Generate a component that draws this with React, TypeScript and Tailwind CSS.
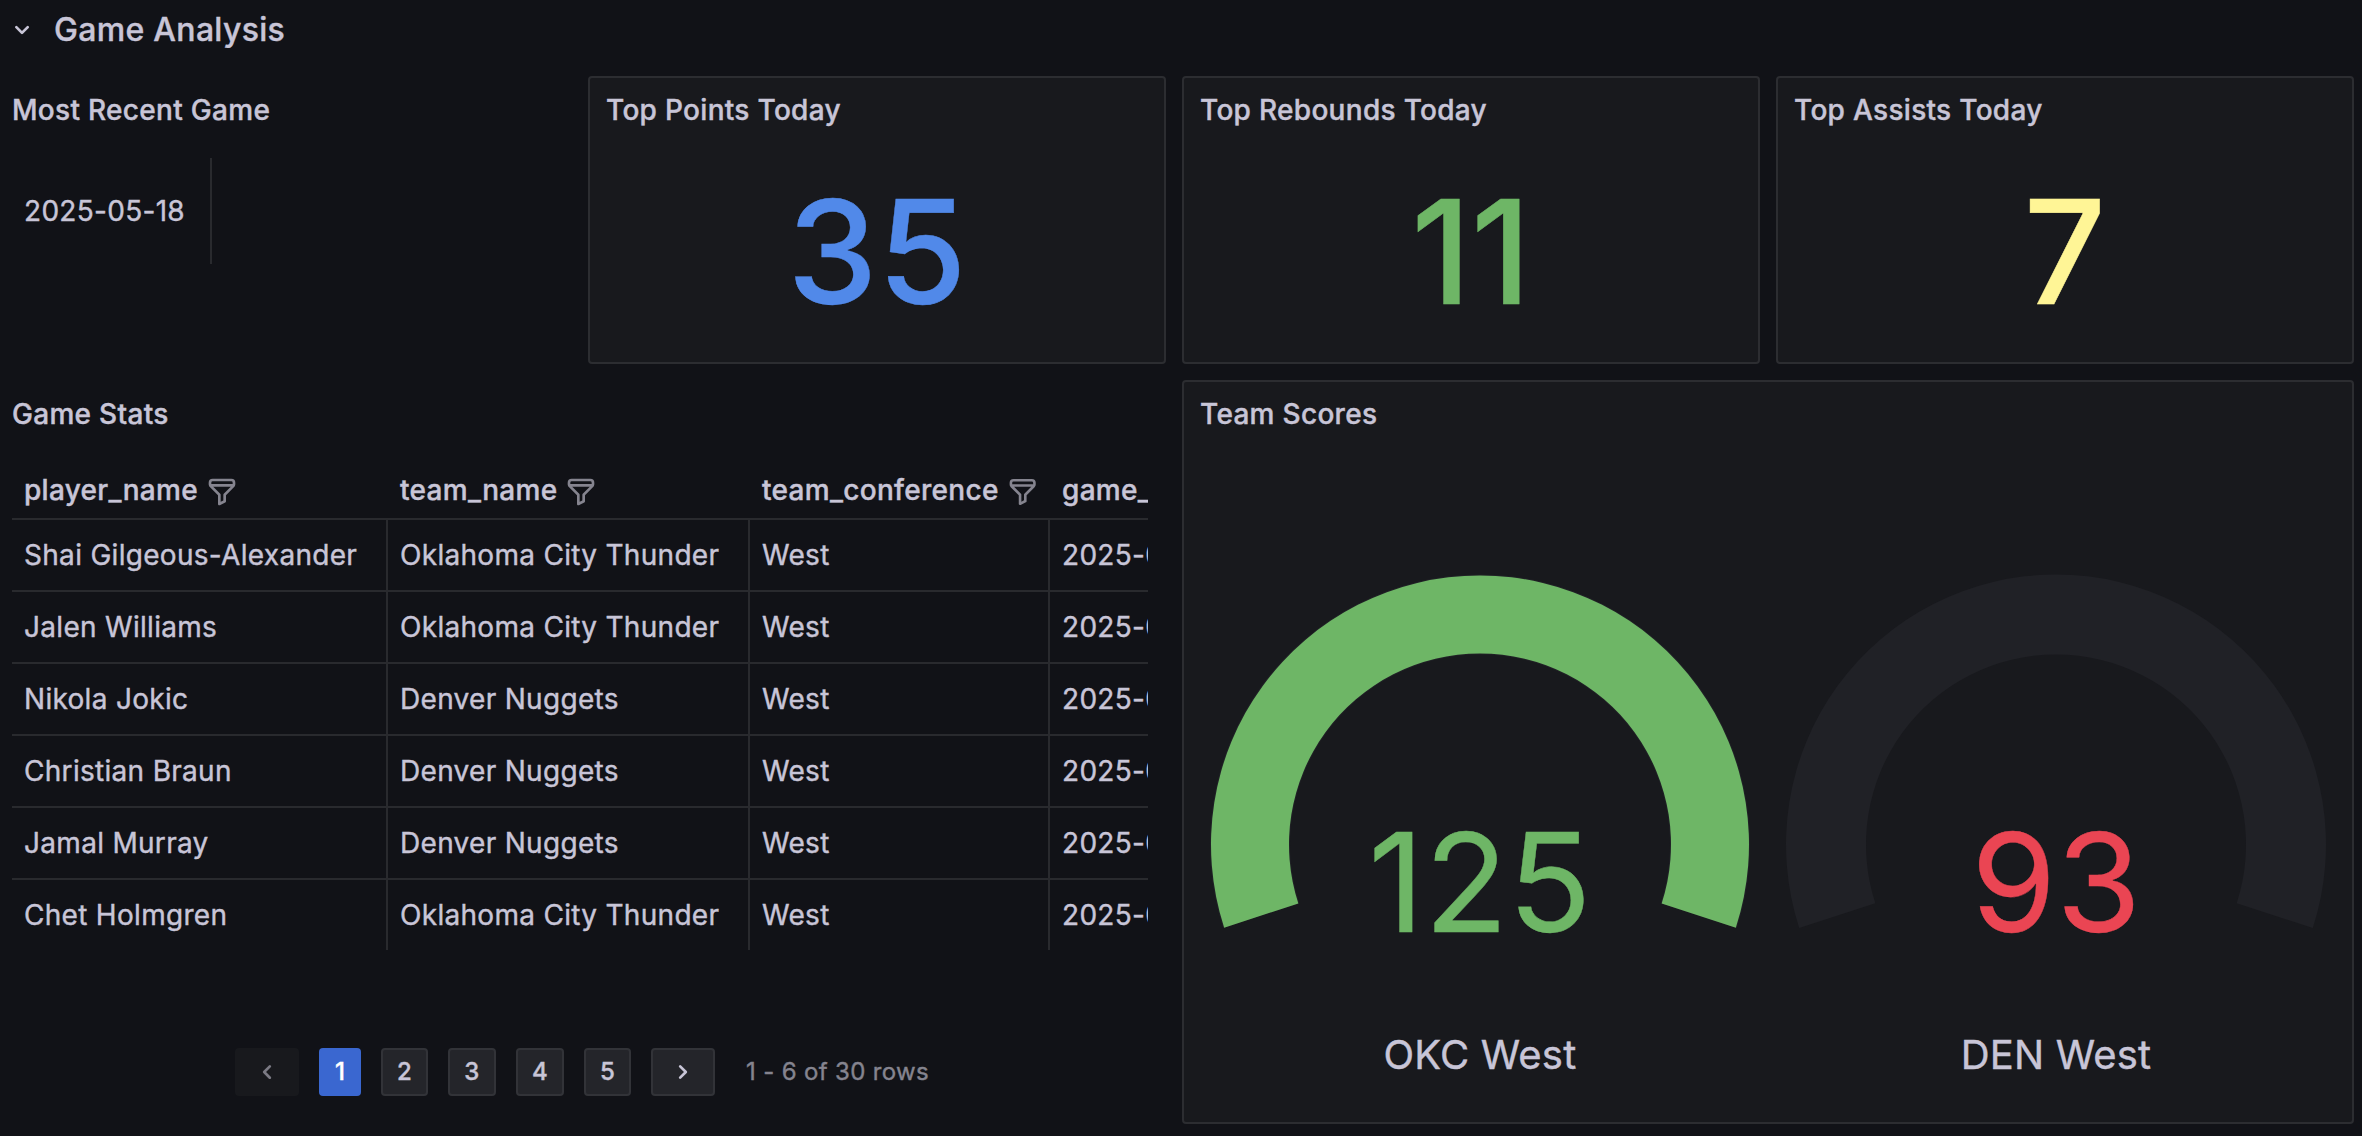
import React from "react";

const ANGLE_DOWN =
  "M17,9.17a1,1,0,0,0-1.41,0L12,12.71,8.46,9.17a1,1,0,0,0-1.41,0,1,1,0,0,0,0,1.42l4.24,4.24a1,1,0,0,0,1.42,0L17,10.59A1,1,0,0,0,17,9.17Z";
const ANGLE_LEFT =
  "M11.29,12l3.54-3.54a1,1,0,0,0,0-1.41,1,1,0,0,0-1.42,0L9.17,11.29a1,1,0,0,0,0,1.42L13.41,17a1,1,0,0,0,.71.29,1,1,0,0,0,.71-.29,1,1,0,0,0,0-1.41Z";
const ANGLE_RIGHT =
  "M14.83,11.29,10.59,7.05a1,1,0,0,0-1.42,0,1,1,0,0,0,0,1.41L12.71,12,9.17,15.54a1,1,0,0,0,0,1.41,1,1,0,0,0,.71.29,1,1,0,0,0,.71-.29l4.24-4.24A1,1,0,0,0,14.83,11.29Z";
const FILTER =
  "M19,2H5A3,3,0,0,0,2,5V6.17a3,3,0,0,0,.25,1.2l0,.06a2.81,2.81,0,0,0,.59.86L9,14.41V21a1,1,0,0,0,.47.85A1,1,0,0,0,10,22a1,1,0,0,0,.45-.11l4-2A1,1,0,0,0,15,19V14.41l6.12-6.12a2.81,2.81,0,0,0,.59-.86l0-.06A3,3,0,0,0,22,6.17V5A3,3,0,0,0,19,2ZM13.29,13.29A1,1,0,0,0,13,14v4.38l-2,1V14a1,1,0,0,0-.29-.71L5.41,8H18.59ZM20,6H4V5A1,1,0,0,1,5,4H19a1,1,0,0,1,1,1Z";

function Icon({ d, className }: { d: string; className: string }) {
  return (
    <svg viewBox="0 0 24 24" className={className} fill="currentColor" aria-hidden="true">
      <path d={d} />
    </svg>
  );
}

function StatPanel({ title, value, color }: { title: string; value: string; color: string }) {
  return (
    <section className="flex h-72 w-[578px] flex-col rounded border-2 border-[#2c2d31] bg-[#18191d]">
      <h2 className="flex h-16 items-center px-4 font-medium">{title}</h2>
      <div className={`flex h-[220px] shrink-0 items-center justify-center text-[144px] leading-none font-medium tracking-normal ${color}`}>
        {value}
      </div>
    </section>
  );
}

// Angles are measured from the horizontal; the arc dips 18 degrees below it on both sides.
function arcPath(cx: number, cy: number, outer: number, inner: number) {
  const a = (18 * Math.PI) / 180;
  const c = Math.cos(a);
  const s = Math.sin(a);
  return [
    `M${cx - outer * c},${cy + outer * s}`,
    `A${outer},${outer} 0 1 1 ${cx + outer * c},${cy + outer * s}`,
    `L${cx + inner * c},${cy + inner * s}`,
    `A${inner},${inner} 0 1 0 ${cx - inner * c},${cy + inner * s}`,
    "Z",
  ].join(" ");
}

function Gauge({ value, label, color, filled }: { value: string; label: string; color: string; filled: boolean }) {
  return (
    <div className={`flex w-[560px] flex-col items-center ${color}`}>
      <div className="relative h-[400px] w-[560px]">
        <svg viewBox="0 0 560 400" className="block h-[400px] w-[560px]" aria-hidden="true">
          <path d={arcPath(280, 280.5, 270, 190)} fill="#202126" />
          {filled && <path d={arcPath(280, 280.5, 269, 191)} fill="currentColor" />}
        </svg>
        <div className="absolute inset-x-0 top-[249px] text-center text-[137.5px] leading-[138px] tracking-normal">{value}</div>
      </div>
      <div className="mt-[67px] text-[40px] leading-[48px] tracking-[0.004em] text-[#c8c5d7]">{label}</div>
    </div>
  );
}

const COLUMNS = [
  { name: "player_name", width: "w-[376px]" },
  { name: "team_name", width: "w-[362px]" },
  { name: "team_conference", width: "w-[300px]" },
  { name: "game_date", width: "w-[300px]" },
];

const ROWS = [
  ["Shai Gilgeous-Alexander", "Oklahoma City Thunder"],
  ["Jalen Williams", "Oklahoma City Thunder"],
  ["Nikola Jokic", "Denver Nuggets"],
  ["Christian Braun", "Denver Nuggets"],
  ["Jamal Murray", "Denver Nuggets"],
  ["Chet Holmgren", "Oklahoma City Thunder"],
].map(([player, team]) => [player, team, "West", "2025-05-18"]);

function StatsTable() {
  return (
    <div className="ml-3 h-[492px] w-[1136px] overflow-hidden">
      <div className="flex h-[62px] w-[1338px] border-b-2 border-[#292a2e]">
        {COLUMNS.map((c) => (
          <div key={c.name} className={`flex shrink-0 items-center gap-2 px-3 pt-1 font-medium ${c.width}`}>
            {c.name}
            <Icon d={FILTER} className="mt-[3px] size-8 text-[#85848f]" />
          </div>
        ))}
      </div>
      {ROWS.map((row) => (
        <div key={row[0]} className="flex h-[72px] w-[1338px]">
          {row.map((cell, i) => (
            <div
              key={i}
              className={`flex shrink-0 items-center border-r-2 border-b-2 border-[#292a2e] px-3 whitespace-nowrap ${COLUMNS[i].width}`}
            >
              {cell}
            </div>
          ))}
        </div>
      ))}
    </div>
  );
}

function Pagination() {
  const box = "flex h-12 items-center justify-center rounded";
  const button = `${box} border-2 border-[#323338] bg-[#24252a]`;
  return (
    <nav className="flex items-center pl-[235px] text-2xl font-medium tracking-[0.01em]">
      <div className={`${box} w-16 bg-[#18191d] text-[#7b7a84]`}>
        <Icon d={ANGLE_LEFT} className="size-8" />
      </div>
      <div className={`${box} ml-5 w-[42px] bg-[#3a67d0] text-white`}>1</div>
      <div className={`${button} ml-5 w-[47px]`}>2</div>
      <div className={`${button} ml-5 w-12`}>3</div>
      <div className={`${button} ml-5 w-12`}>4</div>
      <div className={`${button} ml-5 w-[47px]`}>5</div>
      <div className={`${button} ml-5 w-16`}>
        <Icon d={ANGLE_RIGHT} className="size-8" />
      </div>
      <div className="ml-[31px] font-normal tracking-[0.0143em] text-[#85848f]">1 - 6 of 30 rows</div>
    </nav>
  );
}

export default function App() {
  return (
    <main className="h-[1136px] w-[2362px] overflow-hidden bg-[#111217] font-['Inter',sans-serif] text-[28px] leading-[44px] tracking-[0.0107em] text-[#c8c5d7] [-webkit-text-stroke:0.4px]">
      <header className="flex h-[60px] items-center pl-1.5">
        <Icon d={ANGLE_DOWN} className="size-8" />
        <h1 className="ml-4 text-[32px] font-medium">Game Analysis</h1>
      </header>
      <div className="mt-4 flex gap-4">
        <section className="h-72 w-[572px]">
          <h2 className="flex h-[68px] items-center pl-3 font-medium">Most Recent Game</h2>
          <div className="mt-3.5 ml-3 flex h-[106px] w-[200px] items-center border-r-2 border-[#292a2e] pl-3">2025-05-18</div>
        </section>
        <StatPanel title="Top Points Today" value="35" color="text-[#5189e9]" />
        <StatPanel title="Top Rebounds Today" value="11" color="text-[#6eb666]" />
        <StatPanel title="Top Assists Today" value="7" color="text-[#fff596]" />
      </div>
      <div className="mt-4 flex gap-4">
        <section className="h-[744px] w-[1166px]">
          <h2 className="flex h-[68px] items-center pl-3 font-medium">Game Stats</h2>
          <div className="mt-2.5">
            <StatsTable />
          </div>
          <div className="mt-[98px]">
            <Pagination />
          </div>
        </section>
        <section className="h-[744px] w-[1172px] rounded border-2 border-[#2c2d31] bg-[#18191d]">
          <h2 className="flex h-16 items-center px-4 font-medium">Team Scores</h2>
          <div className="mt-[118px] flex gap-4 pl-4">
            <Gauge value="125" label="OKC West" color="text-[#6eb666]" filled />
            <Gauge value="93" label="DEN West" color="text-[#ea4553]" filled={false} />
          </div>
        </section>
      </div>
    </main>
  );
}
